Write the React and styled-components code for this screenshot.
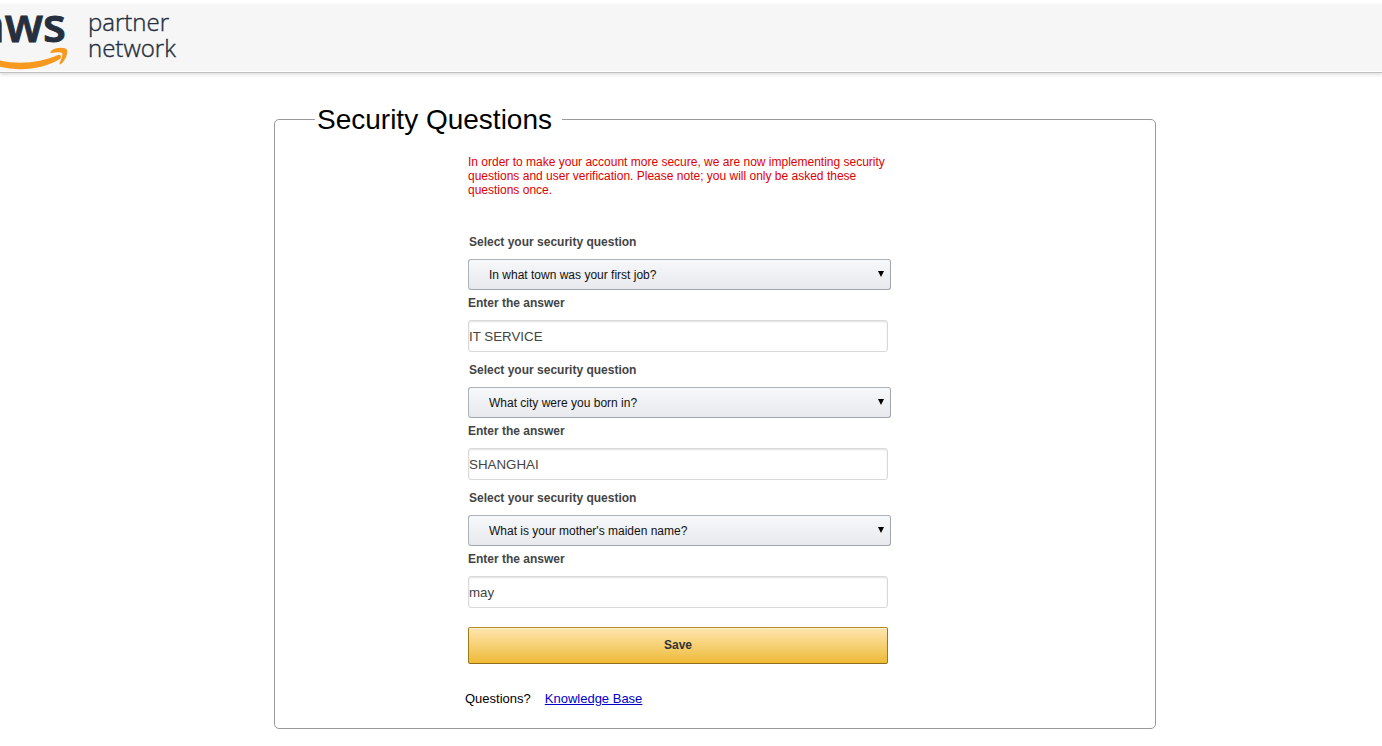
import React from "react";
import styled, { createGlobalStyle } from "styled-components";

const GlobalStyle = createGlobalStyle`
  *, *::before, *::after { box-sizing: border-box; }
  body {
    margin: 0;
    background: #fff;
    color: #000;
    font-family: Arial, "Liberation Sans", sans-serif;
    font-size: 12px;
  }
`;

const Header = styled.header`
  height: 70px;
  margin-top: 3px;
  overflow: hidden;
  background: #f6f6f6;
  border-top: 1px solid #fafafa;
  border-bottom: 1px solid #c0c0c0;
  box-shadow: 0 2px 3px rgba(0, 0, 0, 0.12), inset 0 -1px 0 #fff;
`;

const Logo = styled.svg`
  display: block;
  width: 200px;
  height: 68px;
  font-family: "Open Sans", "Noto Sans", sans-serif;
  fill: #252f3e;
`;

const Main = styled.main`
  display: flex;
  justify-content: center;
  padding: 31px 0 16px 48px;
`;

const Form = styled.form`
  width: 100%;
  max-width: 882px;
`;

const Panel = styled.fieldset`
  margin: 0;
  padding: 20px 24px 20px 193px;
  border: 1px solid #999;
  border-radius: 5px;
`;

const Title = styled.legend`
  margin-left: -153px;
  padding: 0 10px 0 2px;
  font-size: 28px;
  line-height: 31px;
`;

const Content = styled.div`
  width: 100%;
  max-width: 420px;
`;

const Notice = styled.p`
  margin: 0 0 36px;
  color: #e00000;
  line-height: 14px;
`;

const Question = styled.div`
  display: flex;
  flex-direction: column;
  margin-bottom: ${(p) => (p.$last ? 19 : 9)}px;
`;

const Label = styled.label`
  margin-bottom: 8px;
  padding-left: ${(p) => (p.$inset ? 1 : 0)}px;
  color: #444;
  font-weight: bold;
  line-height: 18px;
`;

const SelectBox = styled.div`
  position: relative;
  margin: 0 -3px 4px 0;
`;

const Select = styled.select`
  display: block;
  width: 100%;
  height: 31px;
  padding: 0 24px 0 20px;
  appearance: none;
  color: #111;
  font: 12px Arial, "Liberation Sans", sans-serif;
  background: linear-gradient(#f7f8fa, #e7e9ec);
  border: 1px solid;
  border-color: #adb1b8 #a2a6ac #a2a6ac #adb1b8;
  border-radius: 3px;
`;

const Arrow = styled.svg`
  position: absolute;
  top: 12px;
  right: 7px;
  width: 6px;
  height: 6px;
  pointer-events: none;
`;

const Answer = styled.input`
  width: 100%;
  height: 32px;
  padding: 0;
  color: #444;
  font-family: Arial, "Liberation Sans", sans-serif;
  background: #fff;
  border: 1px solid #d9d9d9;
  border-radius: 3px;
  box-shadow: inset 0 1px 2px rgba(0, 0, 0, 0.12);
`;

const SaveButton = styled.button`
  display: block;
  width: 100%;
  height: 37px;
  padding: 0 0 2px;
  color: #333;
  font: bold 12px Arial, "Liberation Sans", sans-serif;
  background: linear-gradient(#fee6b0, #eeba37);
  border: 1px solid;
  border-color: #b38b22 #9b7a1c #8f7018;
  border-radius: 2px;
  box-shadow: inset 0 1px 0 rgba(255, 255, 255, 0.4);
`;

const Help = styled.p`
  display: flex;
  gap: 14px;
  margin: 26px 0 0 -3px;
  font-size: 13px;
  line-height: 18px;
`;

const HelpLink = styled.a`
  color: #00c;
`;

const questions = [
  { question: "In what town was your first job?", answer: "IT SERVICE" },
  { question: "What city were you born in?", answer: "SHANGHAI" },
  { question: "What is your mother's maiden name?", answer: "may" },
];

function PartnerLogo() {
  return (
    <Logo viewBox="0 4 200 68" role="img" aria-label="aws partner network">
      <text x="66" y="42" textAnchor="end" fontSize="47" fontWeight="600" stroke="#252f3e">aws</text>
      <path
        fill="#f7981f"
        d="M-34 44C-8 66 31 67 58 55C61 54 62 57 60 59C31 76-10 71-35 49Z"
      />
      <path
        fill="#f7981f"
        d="M51 51C55 47 66 47 67 50C68 54 65 61 61 64C60 65 59 64 60 62C62 58 63 54 62 53C61 52 56 52 52 53C50 53 50 52 51 51Z"
      />
      <g fontSize="24" fontWeight="300" stroke="#252f3e" strokeWidth="0.4">
        <text x="88" y="31">partner</text>
        <text x="88" y="57">network</text>
      </g>
    </Logo>
  );
}

function SecurityQuestion({ id, question, answer, last }) {
  return (
    <Question $last={last}>
      <Label htmlFor={`question-${id}`} $inset>Select your security question</Label>
      <SelectBox>
        <Select id={`question-${id}`} defaultValue={question}>
          {questions.map((item) => (
            <option key={item.question}>{item.question}</option>
          ))}
        </Select>
        <Arrow viewBox="0 0 6 6" aria-hidden="true">
          <path d="M0 0H6L3 6Z" />
        </Arrow>
      </SelectBox>
      <Label htmlFor={`answer-${id}`}>Enter the answer</Label>
      <Answer id={`answer-${id}`} type="text" defaultValue={answer} />
    </Question>
  );
}

export default function App() {
  return (
    <>
      <GlobalStyle />
      <Header>
        <PartnerLogo />
      </Header>
      <Main>
        <Form onSubmit={(event) => event.preventDefault()}>
          <Panel>
            <Title>Security Questions</Title>
            <Content>
              <Notice>
                In order to make your account more secure, we are now implementing security
                questions and user verification. Please note; you will only be asked these
                questions once.
              </Notice>
              {questions.map((item, index) => (
                <SecurityQuestion
                  key={item.question}
                  id={index + 1}
                  {...item}
                  last={index === questions.length - 1}
                />
              ))}
              <SaveButton type="submit">Save</SaveButton>
              <Help>
                <span>Questions?</span>
                <HelpLink href="#knowledge-base">Knowledge Base</HelpLink>
              </Help>
            </Content>
          </Panel>
        </Form>
      </Main>
    </>
  );
}
